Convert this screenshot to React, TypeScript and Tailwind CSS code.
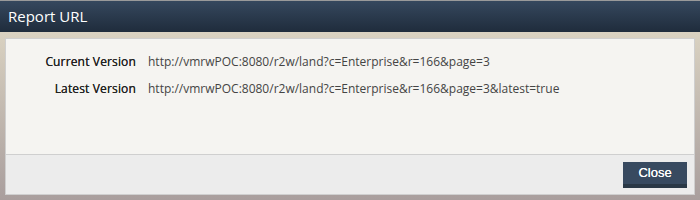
const rows = [
  { label: "Current Version", url: "http://vmrwPOC:8080/r2w/land?c=Enterprise&r=166&page=3" },
  { label: "Latest Version", url: "http://vmrwPOC:8080/r2w/land?c=Enterprise&r=166&page=3&latest=true" },
];

export default function App() {
  return (
    <div className="w-[700px] h-[200px] flex flex-col bg-gradient-to-b from-[#e3dcc8] to-[#a99e9d] font-['Open_Sans',sans-serif]">
      {/* title bar */}
      <div className="h-8 shrink-0 border-t border-[#9a9a9a] bg-gradient-to-b from-[#36485e] to-[#1f2c3c] flex items-center px-2">
        <span className="text-white text-[15px] leading-none">Report URL</span>
      </div>

      <div className="flex-1 px-[5px] pt-[6px] pb-[5px] flex">
        <div className="flex-1 flex flex-col border border-[#cfcfcf] bg-[#f5f4f1]">
          <div className="flex-1 grid grid-cols-[130px_1fr] gap-x-3 gap-y-[10px] content-start pt-[14px] text-xs leading-[17px]">
            {rows.map((row) => (
              <div key={row.label} className="contents">
                <span className="text-right text-[#222] tracking-[0.15px] [text-shadow:0_0_0.3px_#222]">{row.label}</span>
                <span className="text-[#444]">{row.url}</span>
              </div>
            ))}
          </div>

          <div className="h-10 shrink-0 border-t border-[#cfcfcf] bg-[#ececec] flex items-center justify-end pr-[7px]">
            <button className="w-16 h-[26px] bg-[#384a60] border-b-4 border-[#2a3846] text-white text-[13px] font-['Liberation_Sans',sans-serif] leading-none [text-shadow:0_0_0.4px_#fff]">
              Close
            </button>
          </div>
        </div>
      </div>
    </div>
  );
}
